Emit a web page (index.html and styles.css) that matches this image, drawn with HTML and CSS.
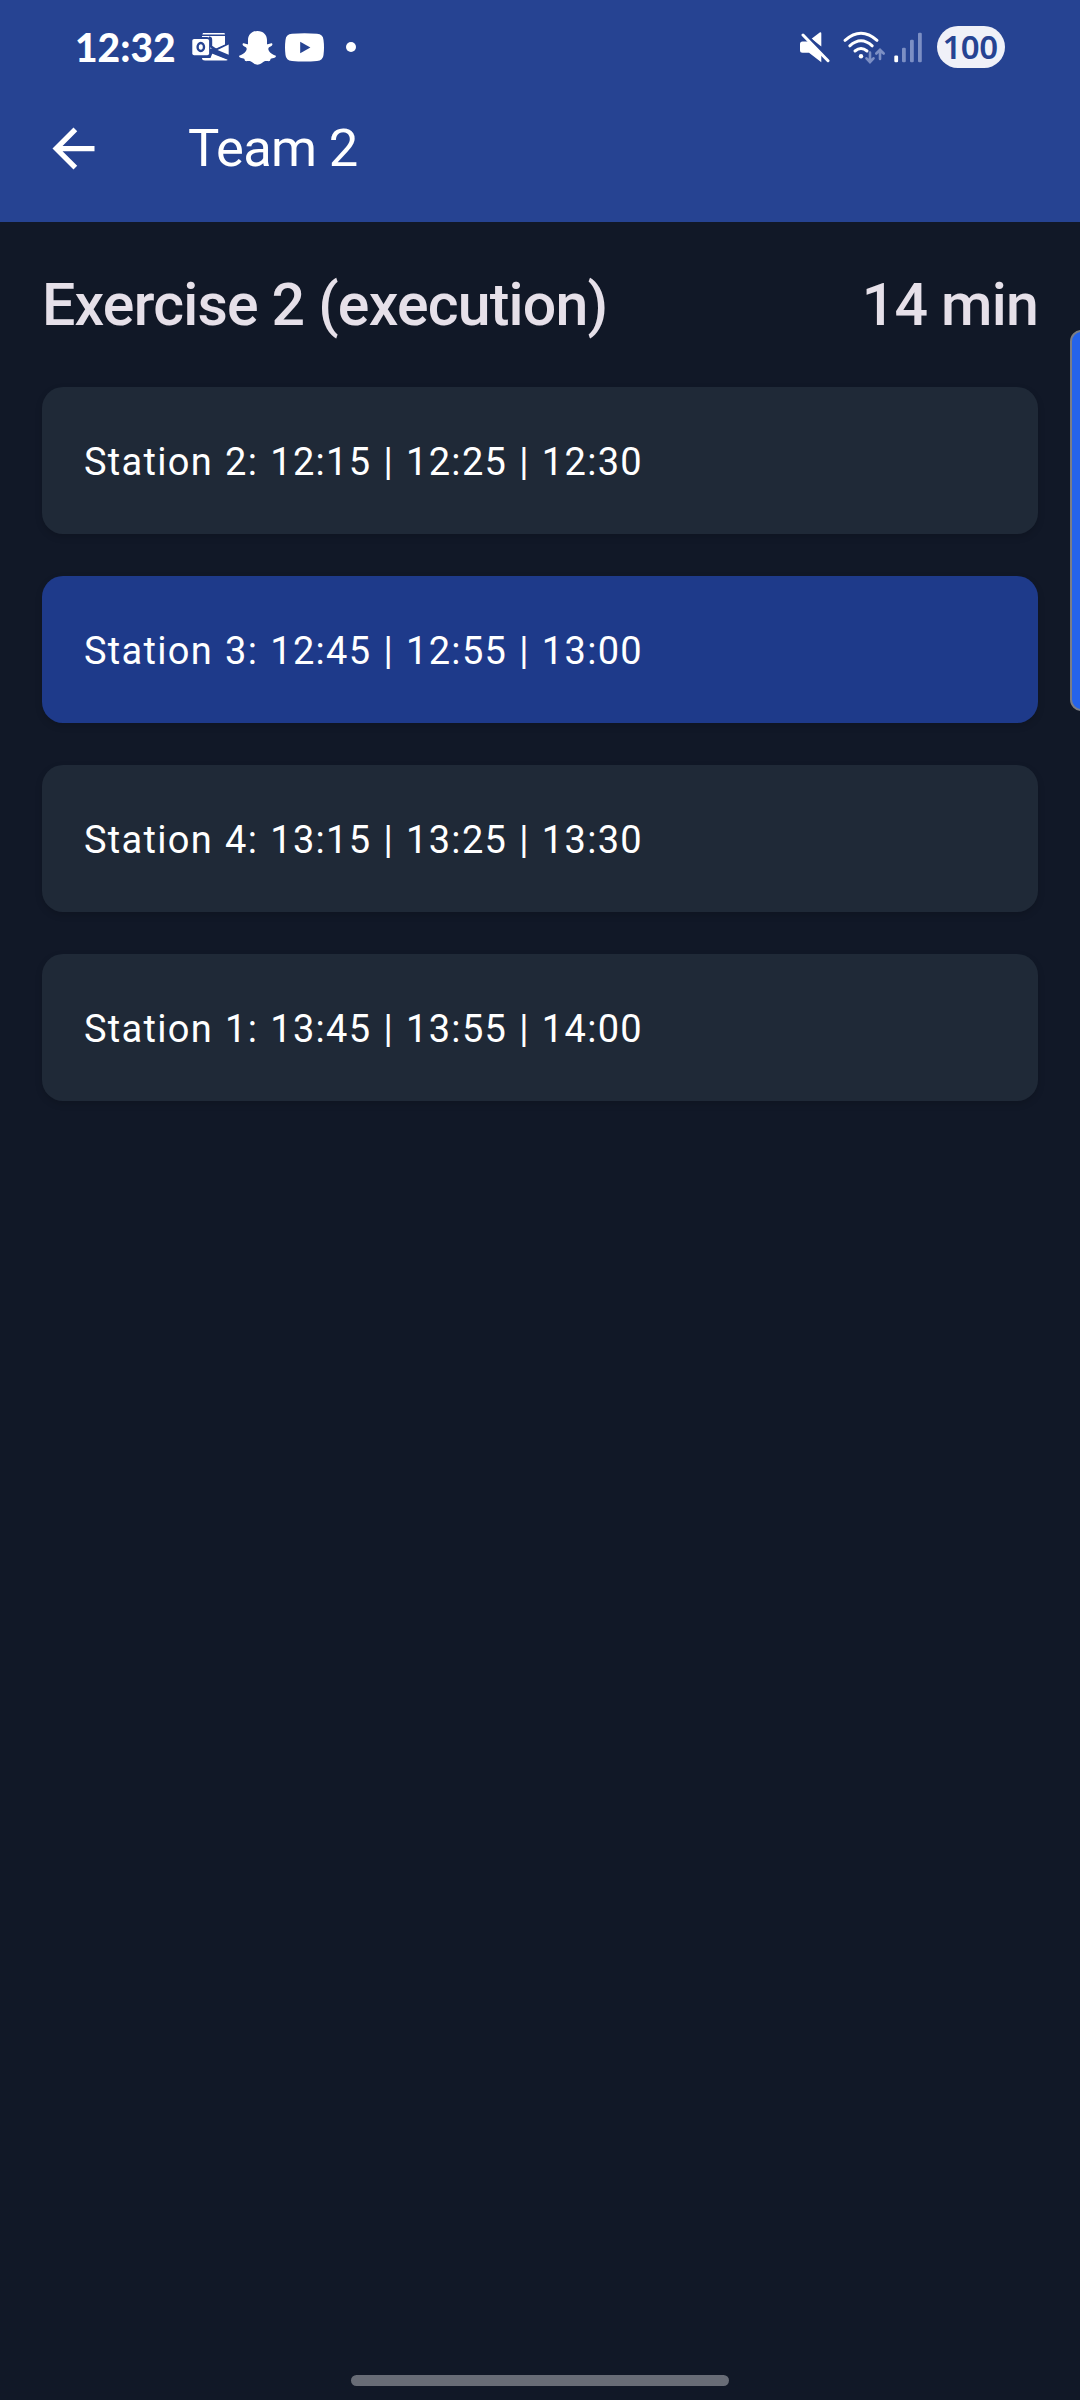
FILE: index.html
```html
<!DOCTYPE html>
<html lang="en">
<head>
<meta charset="utf-8">
<title>Team 2</title>
<link rel="stylesheet" href="styles.css">
</head>
<body>
<div class="screen">
  <header class="header">
    <div class="status">
      <span class="clock">12:32</span>
      <svg class="mail" width="38" height="75" viewBox="192 0 38 75" fill="#fff">
        <path d="M203 33h21.500l.5 1.600H202.300z"/>
        <path d="M202 37v-1h23v9l-8 3.500-7 0V40q0-3-3-3z"/>
        <path d="M202 58h8.500l2-5 15.500 6.500q-.5 1-2 1H205q-3 0-3-2.500z"/>
        <path d="M209 37.800q2 0 2 2V46.500l4.500 3M211 52l17.800 7M211 52l17.800-8" fill="none" stroke="#264392" stroke-width="2.400"/>
        <path d="M217.500 50L228.700 44.500V54.800z"/>
        <rect x="192.300" y="39" width="16.800" height="16.300" rx="1.800"/>
        <ellipse cx="200.800" cy="47" rx="3.200" ry="4" fill="none" stroke="#264392" stroke-width="2.400"/>
      </svg>
      <svg class="ghost" width="38" height="75" viewBox="239 0 38 75" fill="#fff">
        <path d="M257.500 31c-6 0-9.500 4-9.500 9v4.200c-1.500.4-3-.9-4.300-.9-1.400 0-1.500 1.600-.4 2.400 1.400 1 3.400 1.500 3.400 3 0 2.600-3.300 5.600-7 6.800-1 .4-.8 1.500.2 1.900 1.800.9 3.500.7 4.300 1.400.8.800.2 2 1.400 2.300 1.500.3 3.300-.5 5.400.4 2 .9 3.400 3.200 6.500 3.200s4.500-2.300 6.500-3.200c2.100-.9 3.900-.1 5.400-.4 1.200-.3.6-1.500 1.400-2.300.8-.7 2.500-.5 4.300-1.400 1-.4 1.200-1.500.2-1.900-3.700-1.200-7-4.200-7-6.800 0-1.500 2-2 3.400-3 1.100-.8 1-2.400-.4-2.400-1.300 0-2.800 1.300-4.300.9V40c0-5-3.500-9-9.500-9z"/>
      </svg>
      <svg class="video" width="40" height="75" viewBox="284 0 40 75">
        <path fill="#fff" d="M292 33.800Q304.500 32.600 317 33.800Q323 34 323.500 40Q324.500 47.300 323.500 55Q323 60.600 317 60.900Q304.500 62 292 60.900Q286 60.600 285.500 55Q284.500 47.300 285.500 40Q286 34 292 33.800z"/>
        <path fill="#264392" d="M300.200 41.800v11.400l10.200-5.700z"/>
      </svg>
      <span class="dot"></span>
      <svg class="mute" width="31" height="75" viewBox="799 0 31 75" fill="#fff">
        <path d="M802.500 41.500h6L821.300 53v9.300L809 52.800h-6.500q-2.500 0-2.500-2.500V44q0-2.500 2.500-2.500z"/>
        <path d="M811.500 38.800l8.200-6.300q1.600-.8 1.600 1V46.500z"/>
        <path d="M806 34.300L828 57" fill="none" stroke="#264392" stroke-width="2.400"/>
        <path d="M803 35L828 60.700" fill="none" stroke="#fff" stroke-width="3" stroke-linecap="round"/>
      </svg>
      <svg class="wifi" width="44" height="75" viewBox="842 0 44 75" fill="none" stroke="#fff" stroke-width="3" stroke-linecap="round">
        <path d="M845 40.300Q861 26.200 877 40.300"/>
        <path d="M849.800 45.800Q861 35.700 872.200 45.800"/>
        <path d="M855 51Q861 46 867 51"/>
        <circle cx="861" cy="56.200" r="2.200" fill="#fff" stroke="none"/>
        <g stroke="#7c8fc4" stroke-width="2.600">
          <path d="M870 52.500v9M866.500 58.300l3.500 3.700 3.500-3.700M880 59V50M876.300 53.500l3.700-3.700 3.700 3.700"/>
        </g>
      </svg>
      <svg class="signal" width="30" height="75" viewBox="893 0 30 75" fill="#7c8fc4">
        <rect x="894.300" y="55.500" width="3.800" height="6.800" rx="1.200" fill="#fff"/>
        <rect x="902" y="47.700" width="3.800" height="14.600" rx="1.200"/>
        <rect x="910" y="39.700" width="3.800" height="22.600" rx="1.200"/>
        <rect x="918" y="32.700" width="3.800" height="29.600" rx="1.200"/>
      </svg>
      <span class="battery">100</span>
    </div>
    <div class="appbar">
      <svg class="back" width="63" height="63" viewBox="0 0 24 24" fill="#fff"><path d="M20 11H7.830l5.590-5.590L12 4l-8 8 8 8 1.410-1.410L7.830 13H20v-2z"/></svg>
      <span class="title">Team 2</span>
    </div>
  </header>
  <main class="content">
    <div class="heading"><span>Exercise 2 (execution)</span><span>14 min</span></div>
    <div class="card">Station 2: 12:15 | 12:25 | 12:30</div>
    <div class="card active">Station 3: 12:45 | 12:55 | 13:00</div>
    <div class="card">Station 4: 13:15 | 13:25 | 13:30</div>
    <div class="card">Station 1: 13:45 | 13:55 | 14:00</div>
  </main>
  <div class="edge-panel"></div>
  <div class="nav"></div>
</div>
</body>
</html>
```
FILE: styles.css
```css
* { box-sizing: border-box; }
body { margin: 0; background: #111827; }
.screen {
  position: relative;
  display: flex;
  flex-direction: column;
  width: 1080px;
  height: 2400px;
  overflow: hidden;
  background: #111827;
  color: #fff;
  font-family: Roboto, sans-serif;
}
.header { height: 222px; background: #264392; }
.status { display: flex; align-items: center; height: 75px; padding: 0 76px 0 75px; }
.status svg { flex: none; }
.clock {
  width: 117px;
  padding-top: 19px;
  font: 900 39px/1 Lato, sans-serif;
  white-space: nowrap;
}
.ghost { margin-left: 9px; }
.video { margin-left: 7px; }
.dot { width: 10px; height: 10px; margin: 19px 0 0 22px; border-radius: 50%; background: #fff; }
.mute { margin-left: auto; }
.wifi { margin-left: 12px; }
.signal { margin-left: 7px; }
.battery {
  width: 68px;
  height: 42px;
  margin: 18px -1px 0 14px;
  border-radius: 21px;
  background: #f0f1f8;
  color: #264392;
  font: 600 33px/41px "Noto Sans", sans-serif;
  letter-spacing: -.5px;
  text-indent: -2px;
  text-align: center;
}
.appbar { display: flex; align-items: center; height: 147px; padding-left: 42px; }
.title { margin-left: 83px; padding-bottom: 2px; font-size: 52.500px; letter-spacing: -.7px; }
.content { display: flex; flex-direction: column; gap: 42px; padding: 42px; }
.heading {
  display: flex;
  justify-content: space-between;
  align-items: center;
  height: 81px;
  color: #e6e0e9;
  font-size: 59px;
  font-weight: 500;
  letter-spacing: -.8px;
}
.card {
  display: flex;
  align-items: center;
  height: 147px;
  padding: 2px 42px 0;
  border-radius: 21px;
  background: #1f2937;
  box-shadow: 0 3px 7px rgba(0, 0, 0, .15);
  font-size: 38px;
  letter-spacing: 1.300px;
  word-spacing: 1.300px;
}
.active { background: #1e3a8a; }
.edge-panel {
  position: absolute;
  top: 330px;
  right: -13px;
  width: 23px;
  height: 381px;
  border: 2px solid #7b7d84;
  border-radius: 13px;
  background: #2563eb;
}
.nav { width: 378px; height: 11px; margin: auto auto 14px; border-radius: 6px; background: #686c76; }
```
